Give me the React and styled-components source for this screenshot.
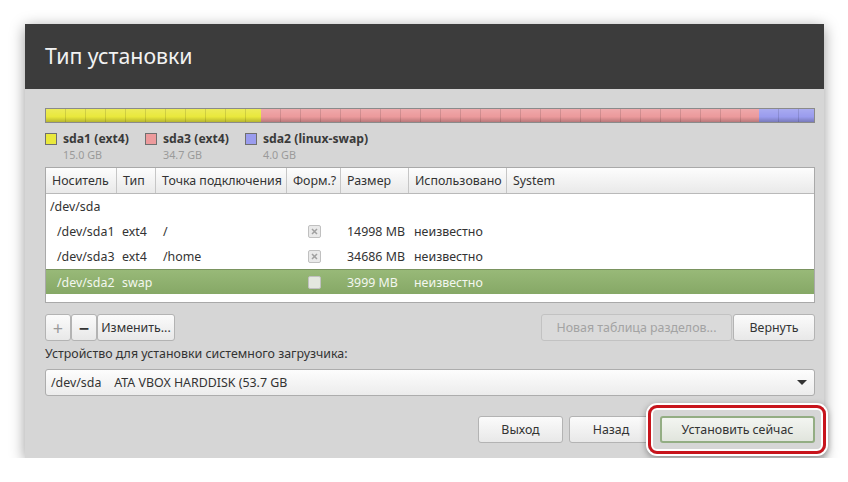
import React from 'react'
import styled, { createGlobalStyle } from 'styled-components'

const Global = createGlobalStyle`
  body {
    margin: 0;
    background: #fff;
    font-family: "Noto Sans", "Open Sans", sans-serif;
    font-size: 12.4px;
    color: #333;
  }
`

const Window = styled.div`
  margin: 24px 0 0 25px;
  width: 799px;
  height: 434px;
  background: #d6d6d6;
  box-shadow: 0 3px 14px rgba(0, 0, 0, 0.4);
  display: flex;
  flex-direction: column;
`
const TitleBar = styled.div`
  height: 65px;
  background: #3c3c3c;
  display: flex;
  align-items: center;
  padding-left: 20px;
  color: #f2f2f2;
  font-size: 21.3px;
  padding-bottom: 2px;
  box-sizing: border-box;
`
const Body = styled.div`
  padding: 19px 9px 0 20px;
  display: flex;
  flex-direction: column;
`
const Bar = styled.div`
  height: 15px;
  display: flex;
  border: 1px solid #8a8a8a;
  box-sizing: border-box;
`
const Seg = styled.div`
  flex: ${p => p.$grow};
  background-color: ${p => p.$color};
  background-image:
    repeating-linear-gradient(90deg, transparent 0 19px, rgba(0,0,0,0.12) 19px 20px),
    linear-gradient(180deg, rgba(255,255,255,0.15) 0%, rgba(255,255,255,0) 60%, rgba(0,0,0,0.22) 100%);
`
const Legend = styled.div`
  display: flex;
  margin-top: 9px;
  height: 35px;
`
const LegendItem = styled.div`
  display: flex;
  width: ${p => p.$w}px;
`
const Swatch = styled.div`
  width: 12px;
  height: 12px;
  margin-top: 1px;
  background: ${p => p.$color};
  border: 1px solid #6f6f6f;
  box-sizing: border-box;
`
const LegendText = styled.div`
  margin-left: 6px;
  line-height: 14px;
  b {
    display: block;
    font-size: 12.2px;
    color: #3a3a3a;
  }
  span {
    display: block;
    font-size: 10.8px;
    color: #9a9a9a;
    margin-top: 2px;
  }
`
const Table = styled.div`
  background: #fff;
  border: 1px solid #a9a9a9;
  height: 136px;
  box-sizing: border-box;
`
const Row = styled.div`
  display: grid;
  grid-template-columns: 71px 39px 131px 54px 68px 98px 1fr;
  height: ${p => (p.$head ? 26 : 25)}px;
  align-items: center;
  background: ${p =>
    p.$head ? 'linear-gradient(#fdfdfd, #e9e9e9)' : p.$sel ? 'linear-gradient(#98b978, #86a866)' : 'transparent'};
  color: ${p => (p.$sel ? '#f3f7ef' : '#333')};
  border-bottom: ${p => (p.$head ? '1px solid #b9b9b9' : 'none')};
  border-top: ${p => (p.$sel ? '1px solid #7a9360' : 'none')};
  box-sizing: border-box;
`
const Head = styled.div`
  height: 100%;
  display: flex;
  align-items: center;
  padding-left: 6px;
  border-right: 1px solid #c6c6c6;
  white-space: nowrap;
  &:last-child { border-right: none; }
`
const Cell = styled.div`
  padding-left: ${p => p.$pad ?? 5}px;
  white-space: nowrap;
  display: flex;
  justify-content: ${p => (p.$center ? 'center' : 'flex-start')};
`
const Wide = styled.div`
  grid-column: 1 / -1;
  padding-left: 4px;
`
const Check = styled.div`
  width: 13px;
  height: 13px;
  border: 1px solid #c0c0c0;
  border-radius: 2px;
  background: ${p => (p.$sel ? '#e4e8df' : '#e9e9e9')};
  display: flex;
  align-items: center;
  justify-content: center;
  box-sizing: border-box;
`
const Tools = styled.div`
  display: flex;
  justify-content: space-between;
  margin-top: 11px;
`
const Group = styled.div`
  display: flex;
`
const Btn = styled.button`
  height: 27px;
  width: ${p => (p.$w ? `${p.$w}px` : 'auto')};
  padding: 0;
  font-family: inherit;
  font-size: 12.4px;
  color: ${p => (p.$off ? '#a3a3a3' : '#333')};
  background: ${p => (p.$off ? '#dadada' : 'linear-gradient(#fbfbfb, #e8e8e8)')};
  border: 1px solid ${p => (p.$off ? '#c2c2c2' : '#b3b3b3')};
  border-radius: 3px;
  margin-left: ${p => p.$ml ?? 0}px;
  display: flex;
  align-items: center;
  justify-content: center;
  box-sizing: border-box;
`
const Sign = styled.span`
  font-size: 18px;
  font-weight: ${p => (p.$strong ? 700 : 400)};
  color: ${p => (p.$dim ? '#9a9a9a' : '#333')};
  line-height: 1;
`
const Label = styled.div`
  margin-top: 3px;
  height: 20px;
  line-height: 20px;
`
const Combo = styled.div`
  margin-top: 5px;
  height: 27px;
  border: 1px solid #adadad;
  border-radius: 3px;
  background: linear-gradient(#fdfdfd, #ececec);
  display: flex;
  align-items: center;
  justify-content: space-between;
  padding: 0 7px 0 5px;
  box-sizing: border-box;
  white-space: pre;
`
const Arrow = styled.div`
  width: 0;
  height: 0;
  border-left: 5px solid transparent;
  border-right: 5px solid transparent;
  border-top: 5px solid #333;
`
const Footer = styled.div`
  display: flex;
  justify-content: flex-end;
  margin-top: 20px;
`
const Highlight = styled.div`
  position: relative;
  margin-left: 7px;
  &::before {
    content: '';
    position: absolute;
    left: -12px;
    top: -11px;
    right: -11px;
    bottom: -11px;
    border: 3px solid #c8141c;
    border-radius: 9px;
    box-shadow: 0 0 0 2px #fff, 0 2px 6px 2px rgba(0,0,0,0.35), inset 0 0 0 2px #fff;
    pointer-events: none;
  }
`
const Primary = styled(Btn)`
  width: 155px;
  border: 2px solid #93ad83;
  background: linear-gradient(#f3f5f1, #e1e5dd);
`

const XMark = () => (
  <svg width="7" height="7" viewBox="0 0 7 7">
    <path d="M1 1 L6 6 M6 1 L1 6" stroke="#a0a0a0" strokeWidth="1.5" />
  </svg>
)

const cols = ['Носитель', 'Тип', 'Точка подключения', 'Форм.?', 'Размер', 'Использовано', 'System']

const parts = [
  { dev: '/dev/sda1', type: 'ext4', mount: '/', size: '14998 MB', x: true },
  { dev: '/dev/sda3', type: 'ext4', mount: '/home', size: '34686 MB', x: true },
  { dev: '/dev/sda2', type: 'swap', mount: '', size: '3999 MB', sel: true },
]

export default function App() {
  return (
    <>
      <Global />
      <Window>
        <TitleBar>Тип установки</TitleBar>
        <Body>
          <Bar>
            <Seg $grow={215} $color="#e9e83c" />
            <Seg $grow={498} $color="#ec9a9c" />
            <Seg $grow={55} $color="#9a9cee" />
          </Bar>
          <Legend>
            <LegendItem $w={100}>
              <Swatch $color="#e9e83c" />
              <LegendText><b>sda1 (ext4)</b><span>15.0 GB</span></LegendText>
            </LegendItem>
            <LegendItem $w={100}>
              <Swatch $color="#ec9a9c" />
              <LegendText><b>sda3 (ext4)</b><span>34.7 GB</span></LegendText>
            </LegendItem>
            <LegendItem $w={160}>
              <Swatch $color="#9a9cee" />
              <LegendText><b>sda2 (linux-swap)</b><span>4.0 GB</span></LegendText>
            </LegendItem>
          </Legend>
          <Table>
            <Row $head>
              {cols.map(c => <Head key={c}>{c}</Head>)}
            </Row>
            <Row><Wide>/dev/sda</Wide></Row>
            {parts.map(p => (
              <Row key={p.dev} $sel={p.sel}>
                <Cell $pad={11}>{p.dev}</Cell>
                <Cell>{p.type}</Cell>
                <Cell $pad={7}>{p.mount}</Cell>
                <Cell $center $pad={0}>
                  <Check $sel={p.sel}>{p.x && <XMark />}</Check>
                </Cell>
                <Cell $pad={6}>{p.size}</Cell>
                <Cell $pad={5}>неизвестно</Cell>
                <Cell />
              </Row>
            ))}
          </Table>
          <Tools>
            <Group>
              <Btn $w={26}><Sign $dim>+</Sign></Btn>
              <Btn $w={26}><Sign $strong>−</Sign></Btn>
              <Btn $w={78}>Изменить...</Btn>
            </Group>
            <Group>
              <Btn $off $w={191}>Новая таблица разделов...</Btn>
              <Btn $w={82} $ml={1}>Вернуть</Btn>
            </Group>
          </Tools>
          <Label>Устройство для установки системного загрузчика:</Label>
          <Combo>
            <span>/dev/sda    ATA VBOX HARDDISK (53.7 GB</span>
            <Arrow />
          </Combo>
          <Footer>
            <Btn $w={85}>Выход</Btn>
            <Btn $w={84} $ml={6}>Назад</Btn>
            <Highlight>
              <Primary>Установить сейчас</Primary>
            </Highlight>
          </Footer>
        </Body>
      </Window>
    </>
  )
}
